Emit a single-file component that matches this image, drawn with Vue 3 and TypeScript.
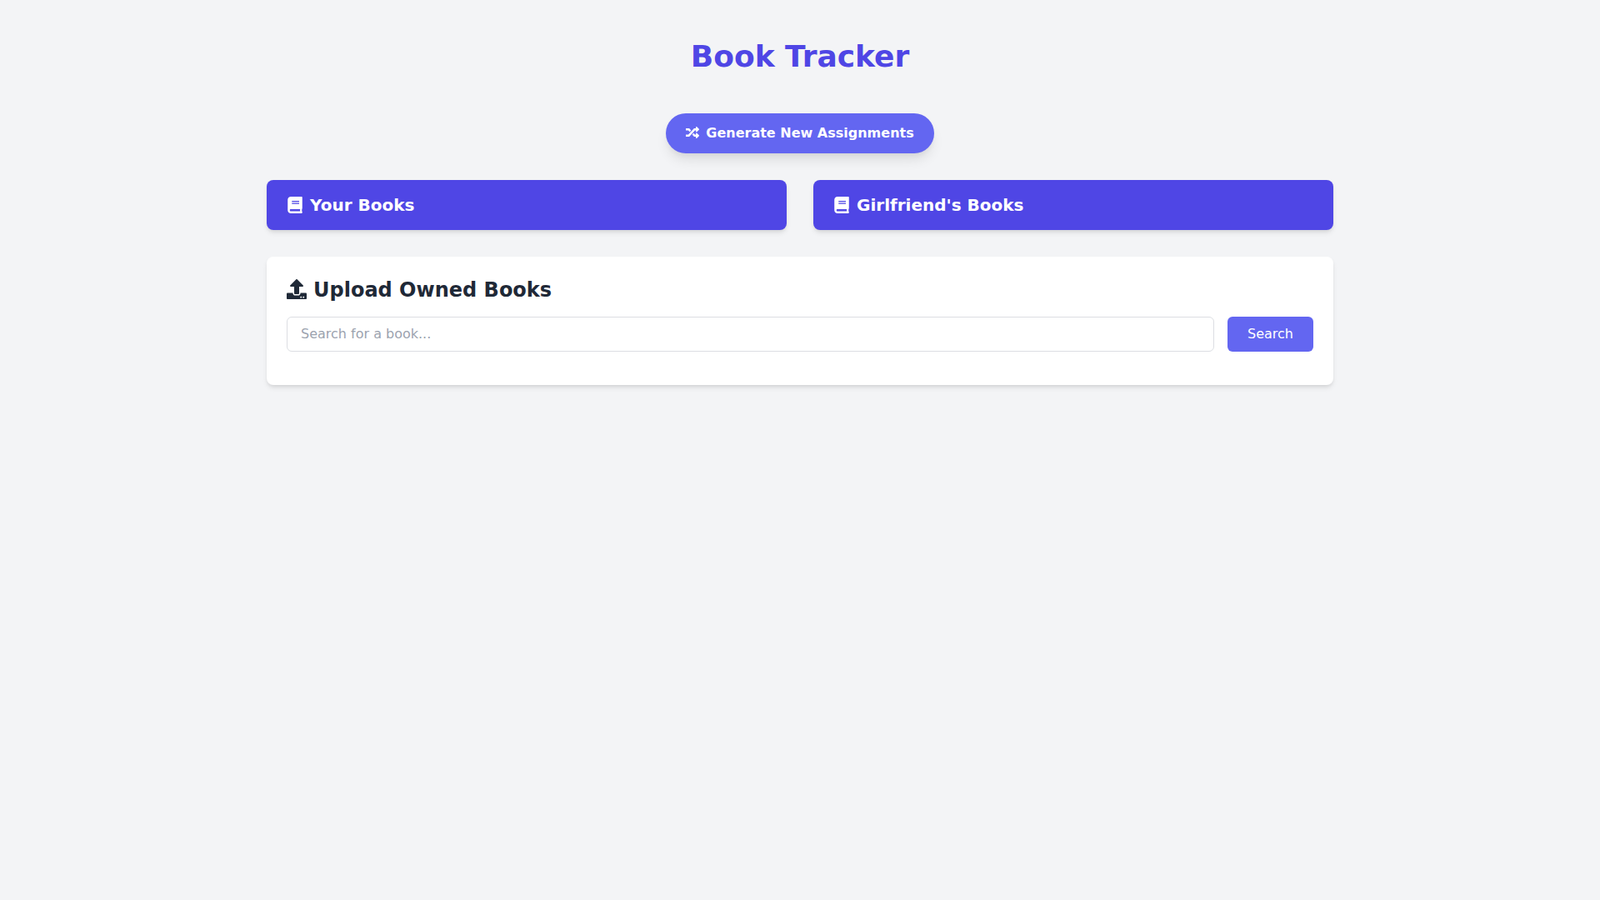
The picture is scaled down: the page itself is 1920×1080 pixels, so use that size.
<script setup lang="ts">
import { ref } from "vue";

const owners = ["Your Books", "Girlfriend's Books"];
const query = ref("");
</script>

<template>
  <main class="page">
    <h1 class="title">Book Tracker</h1>

    <div class="actions">
      <button type="button" class="generate">
        <svg class="icon" viewBox="0 0 512 512" aria-hidden="true">
          <path
            fill="currentColor"
            d="M504.971 359.029c9.373 9.373 9.373 24.569 0 33.941l-80 79.984c-15.01 15.01-40.971 4.49-40.971-16.971V416h-58.785a12.004 12.004 0 0 1-8.773-3.812l-70.556-75.596 53.333-57.143L352 336h32v-39.981c0-21.438 25.943-31.998 40.971-16.971l80 79.981zM12 176h84l52.781 56.551 53.333-57.143-70.556-75.596A11.999 11.999 0 0 0 122.785 96H12c-6.627 0-12 5.373-12 12v56c0 6.627 5.373 12 12 12zm372 0v39.984c0 21.46 25.961 31.98 40.971 16.971l80-79.984c9.373-9.373 9.373-24.569 0-33.941l-80-79.981C409.943 24.021 384 34.582 384 56.019V96h-58.785a12.004 12.004 0 0 0-8.773 3.812L96 336H12c-6.627 0-12 5.373-12 12v56c0 6.627 5.373 12 12 12h110.785c3.326 0 6.503-1.381 8.773-3.812L352 176h32z"
          />
        </svg>Generate New Assignments
      </button>
    </div>

    <section class="columns">
      <h2 v-for="owner in owners" :key="owner" class="column-header">
        <svg class="icon" viewBox="0 0 448 512" aria-hidden="true">
          <path
            fill="currentColor"
            d="M448 360V24c0-13.3-10.7-24-24-24H96C43 0 0 43 0 96v320c0 53 43 96 96 96h328c13.3 0 24-10.7 24-24v-16c0-7.5-3.5-14.3-8.9-18.7-4.2-15.4-4.2-59.3 0-74.7 5.4-4.3 8.9-11.1 8.9-18.6zM128 134c0-3.3 2.7-6 6-6h212c3.3 0 6 2.7 6 6v20c0 3.3-2.7 6-6 6H134c-3.3 0-6-2.7-6-6v-20zm0 64c0-3.3 2.7-6 6-6h212c3.3 0 6 2.7 6 6v20c0 3.3-2.7 6-6 6H134c-3.3 0-6-2.7-6-6v-20zm253.4 250H96c-17.7 0-32-14.3-32-32 0-17.6 14.4-32 32-32h285.4c-1.9 17.1-1.9 46.9 0 64z"
          />
        </svg>{{ owner }}
      </h2>
    </section>

    <section class="upload">
      <h2 class="upload__title">
        <svg class="icon" viewBox="0 0 512 512" aria-hidden="true">
          <path
            fill="currentColor"
            d="M296 384h-80c-13.3 0-24-10.7-24-24V192h-87.7c-17.8 0-26.7-21.5-14.1-34.1L242.3 5.7c7.5-7.5 19.8-7.5 27.3 0l152.2 152.2c12.6 12.6 3.7 34.1-14.1 34.1H320v168c0 13.3-10.7 24-24 24zm216-8v112c0 13.3-10.7 24-24 24H24c-13.3 0-24-10.7-24-24V376c0-13.3 10.7-24 24-24h136v8c0 30.9 25.1 56 56 56h80c30.9 0 56-25.1 56-56v-8h136c13.3 0 24 10.7 24 24zm-124 88c0-11-9-20-20-20s-20 9-20 20 9 20 20 20 20-9 20-20zm64 0c0-11-9-20-20-20s-20 9-20 20 9 20 20 20 20-9 20-20z"
          />
        </svg>Upload Owned Books
      </h2>
      <form class="upload__search" @submit.prevent>
        <input v-model="query" class="upload__input" type="text" placeholder="Search for a book..." />
        <button type="submit" class="upload__button">Search</button>
      </form>
    </section>
  </main>
</template>

<style>
html,
body {
  margin: 0;
  min-height: 100%;
  background: #f3f4f6;
}
</style>

<style scoped>
.page {
  box-sizing: border-box;
  width: 1280px;
  min-height: 1080px;
  margin: 0 auto;
  padding-top: 48px;
  font-family: "DejaVu Sans", sans-serif;
  font-size: 16px;
  line-height: 24px;
}

.title {
  margin: 0 0 48px;
  font-size: 36px;
  line-height: 40px;
  font-weight: 700;
  text-align: center;
  color: #4f46e5;
}

.actions {
  display: flex;
  justify-content: center;
  margin-bottom: 32px;
}

/* icons sit in a 1em box, the narrower book glyph is centred in it */
.icon {
  display: inline-block;
  width: 1em;
  height: 1em;
  margin-right: 8px;
  vertical-align: -0.125em;
}

.generate {
  padding: 12px 24px;
  border: none;
  border-radius: 9999px;
  background: #6366f1;
  color: #ffffff;
  font: inherit;
  font-weight: 700;
  cursor: pointer;
  box-shadow: 0 10px 15px -3px rgba(0, 0, 0, 0.1), 0 4px 6px -2px rgba(0, 0, 0, 0.05);
}

.columns {
  display: grid;
  grid-template-columns: 1fr 1fr;
  gap: 32px;
  margin-bottom: 32px;
}

.column-header {
  margin: 0;
  padding: 16px 24px;
  border-radius: 8px;
  background: #4f46e5;
  color: #ffffff;
  font-size: 20px;
  line-height: 28px;
  font-weight: 700;
  box-shadow: 0 4px 6px -1px rgba(0, 0, 0, 0.1), 0 2px 4px -1px rgba(0, 0, 0, 0.06);
}

.upload {
  padding: 24px;
  border-radius: 8px;
  background: #ffffff;
  box-shadow: 0 4px 6px -1px rgba(0, 0, 0, 0.1), 0 2px 4px -1px rgba(0, 0, 0, 0.06);
}

.upload__title {
  margin: 0 0 16px;
  font-size: 24px;
  line-height: 32px;
  font-weight: 700;
  color: #1f2937;
}

.upload__search {
  display: flex;
  gap: 16px;
  margin-bottom: 16px;
}

.upload__input {
  flex: 1;
  box-sizing: border-box;
  height: 42px;
  padding: 7px 16px 9px;
  border: 1px solid #dcdee3;
  border-radius: 6px;
  font-family: inherit;
  font-size: 16px;
  line-height: normal;
  color: #1f2937;
  outline: none;
}

.upload__input::placeholder {
  color: #9ca3af;
  opacity: 1;
}

.upload__button {
  padding: 8px 24px;
  border: none;
  border-radius: 6px;
  background: #6366f1;
  color: #ffffff;
  font: inherit;
  cursor: pointer;
}
</style>
